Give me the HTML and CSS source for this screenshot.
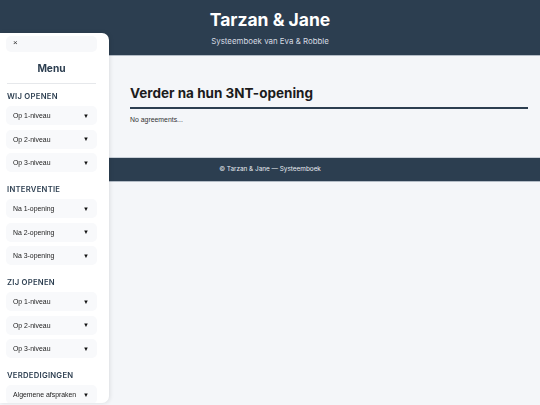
FILE: index.html
```html
<!DOCTYPE html>
<html lang="nl">
<head>
<meta charset="utf-8">
<title>Tarzan &amp; Jane</title>
<link rel="stylesheet" href="styles.css">
</head>
<body>
<header class="site-header">
  <h1 class="site-title">Tarzan &amp; Jane</h1>
  <p class="site-subtitle">Systeemboek van Eva &amp; Robble</p>
</header>

<main class="content">
  <h2 class="page-title">Verder na hun 3NT-opening</h2>
  <p class="page-text">No agreements...</p>
</main>

<footer class="site-footer">© Tarzan &amp; Jane — Systeemboek</footer>

<nav class="sidebar">
  <button class="close-btn">×</button>
  <div class="menu-title">Menu</div>
  <div class="group">
    <div class="group-title">WIJ OPENEN</div>
    <div class="item"><span>Op 1-niveau</span><span class="arrow">▼</span></div>
    <div class="item"><span>Op 2-niveau</span><span class="arrow">▼</span></div>
    <div class="item"><span>Op 3-niveau</span><span class="arrow">▼</span></div>
  </div>
  <div class="group">
    <div class="group-title">INTERVENTIE</div>
    <div class="item"><span>Na 1-opening</span><span class="arrow">▼</span></div>
    <div class="item"><span>Na 2-opening</span><span class="arrow">▼</span></div>
    <div class="item"><span>Na 3-opening</span><span class="arrow">▼</span></div>
  </div>
  <div class="group">
    <div class="group-title">ZIJ OPENEN</div>
    <div class="item"><span>Op 1-niveau</span><span class="arrow">▼</span></div>
    <div class="item"><span>Op 2-niveau</span><span class="arrow">▼</span></div>
    <div class="item"><span>Op 3-niveau</span><span class="arrow">▼</span></div>
  </div>
  <div class="group">
    <div class="group-title">VERDEDIGINGEN</div>
    <div class="item"><span>Algemene afspraken</span><span class="arrow">▼</span></div>
  </div>
</nav>
</body>
</html>
```

FILE: styles.css
```css
* { box-sizing: border-box; }

body {
  margin: 0;
  background: #f4f6f9;
  font-family: Inter, "Noto Sans", sans-serif;
  color: #222;
}

.site-header {
  background: #2c3e50;
  height: 56px;
  border-bottom: 1px solid #b3bcc6;
  text-align: center;
  padding-top: 9px;
  color: #fff;
}

.site-title {
  margin: 0;
  font-size: 17.5px;
  line-height: 22px;
  font-weight: 700;
}

.site-subtitle {
  margin: 5px 0 0;
  font-size: 7.9px;
  line-height: 11px;
  color: #d5dbe2;
}

.content {
  padding: 28px 12px 0 130px;
  height: 101px;
}

.page-title {
  margin: 0;
  font-size: 13.5px;
  line-height: 18px;
  font-weight: 700;
  color: #1c1c1c;
  padding-bottom: 5px;
  border-bottom: 2px solid #2c3e50;
}

.page-text {
  margin: 6px 0 0;
  font-family: "Liberation Sans", Arial, sans-serif;
  font-size: 6.9px;
  line-height: 9px;
  color: #333;
}

.site-footer {
  background: #2c3e50;
  height: 25px;
  border-top: 1px solid #c9d0d8;
  border-bottom: 1px solid #b3bcc6;
  color: #e8ecf0;
  font-size: 6.4px;
  text-align: center;
  line-height: 23px;
}

.sidebar {
  position: fixed;
  left: 0;
  top: 33px;
  bottom: 2px;
  width: 109px;
  background: #fff;
  border-radius: 0 7px 7px 0;
  box-shadow: 1px 0 4px rgba(0, 0, 0, 0.10);
  padding: 3px 12px 0 6px;
  overflow: hidden;
}

.close-btn {
  display: block;
  width: 100%;
  height: 16px;
  border: none;
  border-radius: 5px;
  background: #f7f8fa;
  text-align: left;
  padding: 0 0 2px 7px;
  font-family: "Liberation Sans", Arial, sans-serif;
  font-size: 8px;
  line-height: 14px;
  color: #333;
}

.menu-title {
  margin: 9px 1px 0;
  padding-bottom: 8px;
  border-bottom: 1px solid #e6e8eb;
  text-align: center;
  font-size: 10.2px;
  line-height: 14px;
  font-weight: 700;
  color: #2c3e50;
}

.group {
  display: flex;
  flex-direction: column;
  gap: 4.5px;
  margin-top: 8px;
}

.group + .group {
  margin-top: 13px;
}

.group-title {
  font-size: 7.7px;
  line-height: 10px;
  font-weight: 600;
  letter-spacing: 0.25px;
  color: #2c3e50;
  padding-left: 1px;
  margin-bottom: -0.5px;
}

.item {
  display: flex;
  justify-content: space-between;
  align-items: center;
  height: 19px;
  padding: 0 8px 0 7px;
  background: #f8f9fb;
  border-radius: 5px;
  font-family: "Liberation Sans", Arial, sans-serif;
  font-size: 6.9px;
  white-space: nowrap;
  color: #222;
}

.arrow {
  font-size: 6px;
  color: #111;
}
```
